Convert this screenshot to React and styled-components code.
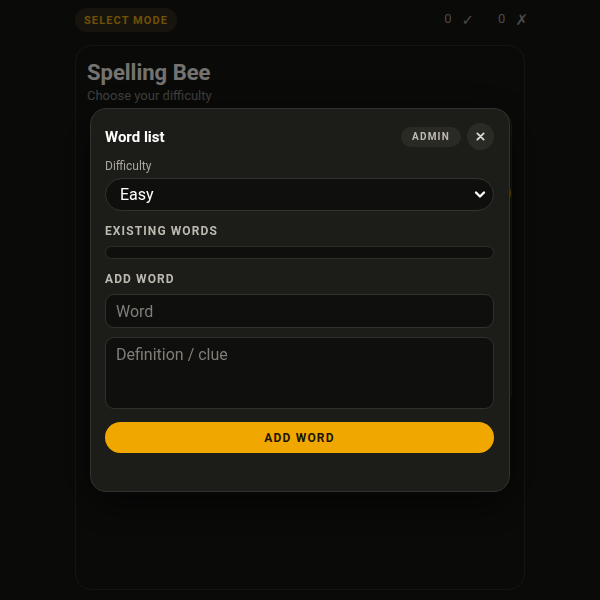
import React from "react";
import styled, { createGlobalStyle } from "styled-components";

const Global = createGlobalStyle`
  html, body { margin: 0; padding: 0; background: #151513; }
  body { font-family: Roboto, "Liberation Sans", sans-serif; }
  * { box-sizing: border-box; }
`;

const Page = styled.div`
  min-height: 600px;
  background: #161614;
  padding-top: 8px;
`;

const Container = styled.div`
  width: 450px;
  margin: 0 auto;
  display: flex;
  flex-direction: column;
  gap: 13px;
`;

const TopBar = styled.div`
  display: flex;
  align-items: center;
  justify-content: space-between;
  height: 24px;
`;

const ModePill = styled.div`
  height: 24px;
  padding: 0 9px;
  border-radius: 12px;
  background: #2e2a1c;
  color: #e8a710;
  font-size: 11px;
  font-weight: 700;
  letter-spacing: 1.1px;
  display: flex;
  align-items: center;
`;

const Scores = styled.div`
  display: flex;
  align-items: center;
  gap: 24px;
  color: #9a9a94;
  font-size: 13px;
  margin-top: -3px;
  margin-right: -3px;
`;

const Score = styled.span`
  display: flex;
  align-items: center;
  gap: 10px;
`;

const Mark = styled.span`
  font-size: 15px;
  font-family: "DejaVu Sans", sans-serif;
  margin-top: 3px;
`;

const Card = styled.div`
  height: 545px;
  border-radius: 16px;
  border: 1px solid #2c2c28;
  background: #151513;
  padding: 14px 14px 14px 11px;
`;

const Title = styled.h1`
  margin: 0;
  font-size: 22px;
  line-height: 26px;
  font-weight: 700;
  color: #f2f0ea;
`;

const Subtitle = styled.p`
  margin: 2px 0 0;
  font-size: 13px;
  line-height: 16px;
  color: #8a8880;
`;

const Panel = styled.div`
  margin: 5px -2px 0 3px;
  border-radius: 16px;
  border: 1px solid #34342e;
  background: #1e1e1a;
  padding: 69px 0 14px 14px;
  display: flex;
  justify-content: flex-end;
  align-items: flex-start;
  height: 300px;
`;

const GoButton = styled.div`
  width: 120px;
  height: 29px;
  border-radius: 15px;
  background: #f0a800;
`;

const Overlay = styled.div`
  position: fixed;
  inset: 0;
  background: rgba(0, 0, 0, 0.52);
  display: flex;
  align-items: center;
  justify-content: center;
`;

const Modal = styled.div`
  width: 420px;
  border-radius: 16px;
  background: #1c1c18;
  border: 1px solid #33332d;
  box-shadow: 0 10px 40px rgba(0, 0, 0, 0.6);
  padding: 14px 15px 38px 14px;
  display: flex;
  flex-direction: column;
`;

const Header = styled.div`
  display: flex;
  align-items: center;
  height: 27px;
`;

const ModalTitle = styled.h2`
  margin: 0;
  flex: 1;
  font-size: 15px;
  font-weight: 700;
  color: #ffffff;
`;

const AdminPill = styled.span`
  height: 20px;
  padding: 0 11px;
  border-radius: 10px;
  background: #2a2a25;
  color: #bdbab2;
  font-size: 10px;
  font-weight: 700;
  letter-spacing: 1.2px;
  display: flex;
  align-items: center;
  margin-right: 6px;
`;

const CloseButton = styled.button`
  width: 27px;
  height: 27px;
  border-radius: 50%;
  border: none;
  background: #2b2b26;
  color: #dcdad4;
  display: flex;
  align-items: center;
  justify-content: center;
  padding: 0;
`;

const FieldLabel = styled.label`
  margin-top: ${(p) => p.$mt || 0}px;
  font-size: 12px;
  line-height: 14px;
  color: #a9a69e;
`;

const SectionLabel = styled.div`
  margin-top: 13px;
  font-size: 12px;
  line-height: 14px;
  font-weight: 700;
  letter-spacing: 1.1px;
  color: #bcb9b0;
`;

const SelectWrap = styled.div`
  position: relative;
  margin-top: 5px;
`;

const Select = styled.select`
  width: 100%;
  height: 33px;
  border-radius: 17px;
  background: #0f0f0d;
  border: 1px solid #34342e;
  color: #ffffff;
  font-family: Roboto, "Liberation Sans", sans-serif;
  font-size: 16px;
  padding: 0 14px;
  appearance: none;
  outline: none;
`;

const Chevron = styled.svg`
  position: absolute;
  right: 8px;
  top: 12px;
  pointer-events: none;
`;

const WordList = styled.div`
  margin-top: 8px;
  height: 13px;
  border-radius: 7px;
  background: #0f0f0d;
  border: 1px solid #2e2e29;
`;

const Input = styled.input`
  margin-top: 8px;
  height: 34px;
  border-radius: 9px;
  background: #0f0f0d;
  border: 1px solid #31312c;
  color: #fff;
  font-family: Roboto, "Liberation Sans", sans-serif;
  font-size: 16px;
  padding: 0 10px;
  outline: none;
  &::placeholder { color: #807e77; }
`;

const TextArea = styled.textarea`
  margin-top: 9px;
  height: 72px;
  border-radius: 9px;
  background: #0f0f0d;
  border: 1px solid #31312c;
  color: #fff;
  font-family: Roboto, "Liberation Sans", sans-serif;
  font-size: 16px;
  padding: 7px 10px;
  resize: none;
  outline: none;
  &::placeholder { color: #807e77; }
`;

const AddButton = styled.button`
  margin-top: 13px;
  height: 31px;
  border-radius: 16px;
  border: none;
  background: #f0a800;
  color: #1b1408;
  font-family: Roboto, "Liberation Sans", sans-serif;
  font-size: 12px;
  font-weight: 700;
  letter-spacing: 1.2px;
`;

export default function App() {
  return (
    <>
      <Global />
      <Page>
        <Container>
          <TopBar>
            <ModePill>SELECT MODE</ModePill>
            <Scores>
              <Score>0 <Mark>✓</Mark></Score>
              <Score>0 <Mark>✗</Mark></Score>
            </Scores>
          </TopBar>
          <Card>
            <Title>Spelling Bee</Title>
            <Subtitle>Choose your difficulty</Subtitle>
            <Panel>
              <GoButton />
            </Panel>
          </Card>
        </Container>
      </Page>
      <Overlay>
        <Modal>
          <Header>
            <ModalTitle>Word list</ModalTitle>
            <AdminPill>ADMIN</AdminPill>
            <CloseButton aria-label="Close">
              <svg width="9" height="9" viewBox="0 0 10 10">
                <path d="M1.5 1.5 L8.5 8.5 M8.5 1.5 L1.5 8.5" stroke="#dcdad4" strokeWidth="2" strokeLinecap="round" />
              </svg>
            </CloseButton>
          </Header>
          <FieldLabel $mt={9}>Difficulty</FieldLabel>
          <SelectWrap>
            <Select defaultValue="easy">
              <option value="easy">Easy</option>
              <option value="medium">Medium</option>
              <option value="hard">Hard</option>
            </Select>
            <Chevron width="12" height="9" viewBox="0 0 12 9">
              <path d="M2 2.5 L6 6.5 L10 2.5" stroke="#ffffff" strokeWidth="2.4" fill="none" strokeLinecap="round" strokeLinejoin="round" />
            </Chevron>
          </SelectWrap>
          <SectionLabel>EXISTING WORDS</SectionLabel>
          <WordList />
          <SectionLabel>ADD WORD</SectionLabel>
          <Input placeholder="Word" />
          <TextArea placeholder="Definition / clue" />
          <AddButton>ADD WORD</AddButton>
        </Modal>
      </Overlay>
    </>
  );
}
